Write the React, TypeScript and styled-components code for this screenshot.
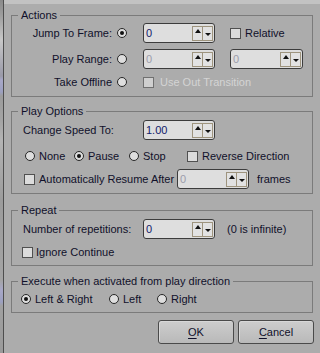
import styled, { createGlobalStyle } from "styled-components";

const GlobalStyle = createGlobalStyle`
  html, body {
    margin: 0;
    padding: 0;
    background: #acacac;
  }
  body {
    font-family: "Liberation Sans", Arial, sans-serif;
    font-size: 11px;
    color: #10102a;
  }
`;

const Screen = styled.div`
  width: 320px;
  height: 353px;
  display: flex;
  overflow: hidden;
  background: #acacac;
`;

const Behind = styled.div`
  width: 3px;
  flex: none;
  background: linear-gradient(
    to bottom,
    #8a8a8a 0px,
    #9c9c9c 14px,
    #c8c8c8 40px,
    #9a9aa8 76px,
    #a8a8c8 80px,
    #9ca0c0 92px,
    #9c9c9c 96px,
    #a4a4a4 120px,
    #b4b4b4 140px,
    #9c9c9c 200px,
    #a4a4a4 280px,
    #a8a8c8 290px,
    #9ca0c0 302px,
    #a0a0a0 306px,
    #9a9a9a 353px
  );
`;

const Dialog = styled.div`
  flex: 1;
  border-left: 1px solid #4e4e4e;
  padding: 8px 7px 0 7px;
  display: flex;
  flex-direction: column;
  background: linear-gradient(to bottom, #c2c2c2 0px, #c2c2c2 4px, #acacac 4px);
`;

const Group = styled.fieldset<{ $mt?: number; $pt: number; $pb: number }>`
  margin: ${(p) => p.$mt ?? 0}px 0 0 0;
  padding: ${(p) => p.$pt}px 0 ${(p) => p.$pb}px 0;
  border: 1px solid #7b7b7b;
  min-width: 0;
`;

const Legend = styled.legend`
  margin-left: 6px;
  padding: 0 3px;
  line-height: 14px;
  font-size: 11px;
  color: #10102a;
`;

const Row = styled.div<{ $mt?: number; $h: number; $pl?: number }>`
  display: flex;
  align-items: center;
  height: ${(p) => p.$h}px;
  margin-top: ${(p) => p.$mt ?? 0}px;
  padding-left: ${(p) => p.$pl ?? 0}px;
  white-space: nowrap;
`;

const RightLabel = styled.span`
  width: 100px;
  text-align: right;
  flex: none;
`;

const Label = styled.span<{ $w?: number; $pl?: number }>`
  width: ${(p) => (p.$w ? `${p.$w}px` : "auto")};
  padding-left: ${(p) => p.$pl ?? 0}px;
  flex: none;
  box-sizing: border-box;
`;

const Text = styled.span<{ $ml?: number; $disabled?: boolean }>`
  margin-left: ${(p) => p.$ml ?? 0}px;
  color: ${(p) => (p.$disabled ? "#d4d4d4" : "#10102a")};
`;

const Circle = styled.span<{ $on?: boolean; $ml?: number }>`
  width: 10px;
  height: 10px;
  box-sizing: border-box;
  margin-left: ${(p) => p.$ml ?? 0}px;
  border: 1px solid #262626;
  border-radius: 50%;
  background: #dedede;
  flex: none;
  display: flex;
  align-items: center;
  justify-content: center;
  &::after {
    content: "";
    width: 4px;
    height: 4px;
    border-radius: 50%;
    background: ${(p) => (p.$on ? "#111" : "transparent")};
  }
`;

const Box = styled.span<{ $ml?: number; $disabled?: boolean }>`
  width: 11px;
  height: 11px;
  box-sizing: border-box;
  margin-left: ${(p) => p.$ml ?? 0}px;
  border: 1px solid ${(p) => (p.$disabled ? "#707070" : "#505050")};
  background: ${(p) => (p.$disabled ? "#cfcfcf" : "#dcdcdc")};
  flex: none;
`;

const Option = styled.span<{ $w?: number }>`
  display: flex;
  align-items: center;
  width: ${(p) => (p.$w ? `${p.$w}px` : "auto")};
  flex: none;
`;

const SpinBox = styled.span<{ $w: number; $ml?: number }>`
  width: ${(p) => p.$w}px;
  height: 20px;
  box-sizing: border-box;
  margin-left: ${(p) => p.$ml ?? 0}px;
  border: 1px solid #3c3c3c;
  border-radius: 3px;
  background: #dedede;
  display: flex;
  align-items: center;
  flex: none;
`;

const SpinValue = styled.span<{ $disabled?: boolean }>`
  flex: 1;
  padding-left: 2px;
  color: ${(p) => (p.$disabled ? "#9c9cac" : "#13206a")};
`;

const Arrow = styled.span<{ $down?: boolean }>`
  width: 11px;
  height: 15px;
  box-sizing: border-box;
  border: 1px solid #9e947e;
  background: #e2e2e2;
  display: flex;
  justify-content: center;
  align-items: ${(p) => (p.$down ? "flex-end" : "flex-start")};
  padding: ${(p) => (p.$down ? "0 0 4px 0" : "2px 0 0 0")};
  margin-left: ${(p) => (p.$down ? "-1px" : "0")};
  margin-right: ${(p) => (p.$down ? "1px" : "0")};
  &::after {
    content: "";
    width: 0;
    height: 0;
    border-left: 3px solid transparent;
    border-right: 3px solid transparent;
    ${(p) =>
      p.$down
        ? "border-top: 3px solid #111;"
        : "border-bottom: 4px solid #111;"}
  }
`;

const Buttons = styled.div`
  display: flex;
  justify-content: flex-end;
  gap: 4px;
  margin-top: 7px;
  margin-right: -1px;
`;

const Button = styled.button`
  width: 76px;
  height: 24px;
  box-sizing: border-box;
  border: 1px solid #4a4a4a;
  border-radius: 3px;
  background: linear-gradient(to bottom, #cdcdcd, #b9b9b9);
  box-shadow: inset 1px 1px 0 #d8d8d8;
  font-family: inherit;
  font-size: 11px;
  color: #10102a;
  padding: 0;
  u {
    text-underline-offset: 2px;
  }
`;

function Spinner({
  value,
  w = 72,
  ml,
  disabled,
}: {
  value: string;
  w?: number;
  ml?: number;
  disabled?: boolean;
}) {
  return (
    <SpinBox $w={w} $ml={ml}>
      <SpinValue $disabled={disabled}>{value}</SpinValue>
      <Arrow />
      <Arrow $down />
    </SpinBox>
  );
}

export default function App() {
  return (
    <>
      <GlobalStyle />
      <Screen>
        <Behind />
        <Dialog>
          <Group $pt={1} $pb={6}>
            <Legend>Actions</Legend>
            <Row $h={20}>
              <RightLabel>Jump To Frame:</RightLabel>
              <Circle $on $ml={5} />
              <Spinner value="0" ml={16} />
              <Box $ml={15} />
              <Text $ml={4}>Relative</Text>
            </Row>
            <Row $h={20} $mt={6}>
              <RightLabel>Play Range:</RightLabel>
              <Circle $ml={5} />
              <Spinner value="0" ml={16} disabled />
              <Spinner value="0" w={73} ml={15} disabled />
            </Row>
            <Row $h={16} $mt={5}>
              <RightLabel>Take Offline</RightLabel>
              <Circle $ml={5} />
              <Box $ml={16} $disabled />
              <Text $ml={6} $disabled>
                Use Out Transition
              </Text>
            </Row>
          </Group>

          <Group $mt={7} $pt={2} $pb={4}>
            <Legend>Play Options</Legend>
            <Row $h={20}>
              <Label $w={131} $pl={11}>
                Change Speed To:
              </Label>
              <Spinner value="1.00" />
            </Row>
            <Row $h={16} $mt={8} $pl={13}>
              <Option $w={49}>
                <Circle />
                <Text $ml={4}>None</Text>
              </Option>
              <Option $w={55}>
                <Circle $on />
                <Text $ml={4}>Pause</Text>
              </Option>
              <Option $w={58}>
                <Circle />
                <Text $ml={4}>Stop</Text>
              </Option>
              <Option>
                <Box />
                <Text $ml={4}>Reverse Direction</Text>
              </Option>
            </Row>
            <Row $h={20} $mt={5} $pl={12}>
              <Option $w={153}>
                <Box />
                <Text $ml={4}>Automatically Resume After</Text>
              </Option>
              <Spinner value="0" disabled />
              <Text $ml={8}>frames</Text>
            </Row>
          </Group>

          <Group $mt={9} $pt={2} $pb={5}>
            <Legend>Repeat</Legend>
            <Row $h={20}>
              <Label $w={131} $pl={11}>
                Number of repetitions:
              </Label>
              <Spinner value="0" />
              <Text $ml={12}>(0 is infinite)</Text>
            </Row>
            <Row $h={16} $mt={5} $pl={10}>
              <Box />
              <Text $ml={3}>Ignore Continue</Text>
            </Row>
          </Group>

          <Group $mt={8} $pt={3} $pb={5}>
            <Legend>Execute when activated from play direction</Legend>
            <Row $h={16} $pl={9}>
              <Option $w={88}>
                <Circle $on />
                <Text $ml={4}>Left &amp; Right</Text>
              </Option>
              <Option $w={48}>
                <Circle />
                <Text $ml={4}>Left</Text>
              </Option>
              <Option>
                <Circle />
                <Text $ml={4}>Right</Text>
              </Option>
            </Row>
          </Group>

          <Buttons>
            <Button>
              <u>O</u>K
            </Button>
            <Button>
              <u>C</u>ancel
            </Button>
          </Buttons>
        </Dialog>
      </Screen>
    </>
  );
}
